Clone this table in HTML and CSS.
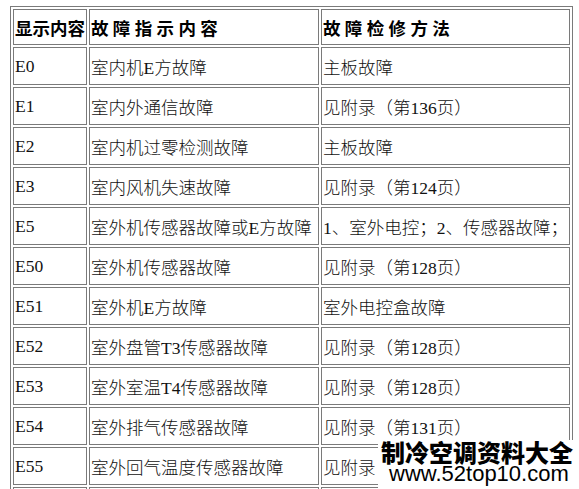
FILE: index.html
```html
<!DOCTYPE html>
<html lang="zh-CN">
<head>
<meta charset="utf-8">
<title>故障代码表</title>
<link rel="stylesheet" href="styles.css">
</head>
<body>
<div class="page">
  <table class="codes">
    <colgroup>
      <col class="c1"><col class="c2"><col class="c3">
    </colgroup>
    <thead>
      <tr class="head">
        <th>显示内容</th>
        <th>故 障 指 示 内 容</th>
        <th>故 障 检 修 方 法</th>
      </tr>
    </thead>
    <tbody>
      <tr><td>E0</td><td>室内机E方故障</td><td>主板故障</td></tr>
      <tr><td>E1</td><td>室内外通信故障</td><td>见附录（第136页）</td></tr>
      <tr><td>E2</td><td>室内机过零检测故障</td><td>主板故障</td></tr>
      <tr><td>E3</td><td>室内风机失速故障</td><td>见附录（第124页）</td></tr>
      <tr><td>E5</td><td>室外机传感器故障或E方故障</td><td>1、室外电控；2、传感器故障；</td></tr>
      <tr><td>E50</td><td>室外机传感器故障</td><td>见附录（第128页）</td></tr>
      <tr><td>E51</td><td>室外机E方故障</td><td>室外电控盒故障</td></tr>
      <tr><td>E52</td><td>室外盘管T3传感器故障</td><td>见附录（第128页）</td></tr>
      <tr><td>E53</td><td>室外室温T4传感器故障</td><td>见附录（第128页）</td></tr>
      <tr><td>E54</td><td>室外排气传感器故障</td><td>见附录（第131页）</td></tr>
      <tr><td>E55</td><td>室外回气温度传感器故障</td><td>见附录</td></tr>
      <tr><td></td><td></td><td></td></tr>
    </tbody>
  </table>
  <div class="mark">
    <div class="mark-title">制冷空调资料大全</div>
    <div class="mark-url">www.52top10.com</div>
  </div>
</div>
</body>
</html>
```
FILE: styles.css
```css
html, body {
  margin: 0;
  padding: 0;
  background: #fff;
}

.page {
  position: relative;
  width: 579px;
  height: 489px;
  overflow: hidden;
}

.codes {
  margin: 6px 0 0 10px;
  table-layout: fixed;
  border-collapse: separate;
  border-spacing: 2px;
  border: 1px solid #7a7a7a;
  font-family: "Liberation Serif", "Noto Sans CJK SC", serif;
  font-size: 17.5px;
  font-weight: 300;
  color: #111;
}

.c1 { width: 74px; }
.c2 { width: 230px; }
.c3 { width: 249px; }

.codes th,
.codes td {
  box-sizing: border-box;
  border: 1px solid #7a7a7a;
  padding: 0 1px;
  text-align: left;
  vertical-align: middle;
  white-space: nowrap;
  overflow: hidden;
  height: 38px;
}

.codes th {
  height: 36px;
  font-weight: bold;
  color: #000;
}

.mark {
  position: absolute;
  left: 378px;
  top: 440px;
  right: 0;
  bottom: 0;
  background: #fff;
  text-align: left;
}

.mark-title {
  margin: 0 0 0 3px;
  font-family: "Noto Sans CJK SC", sans-serif;
  font-weight: 900;
  font-size: 24px;
  line-height: 24px;
  color: #000;
}

.mark-url {
  margin: -2px 0 0 11px;
  font-family: "Liberation Sans", Arial, sans-serif;
  font-size: 22px;
  line-height: 24px;
  color: #000;
}
```
